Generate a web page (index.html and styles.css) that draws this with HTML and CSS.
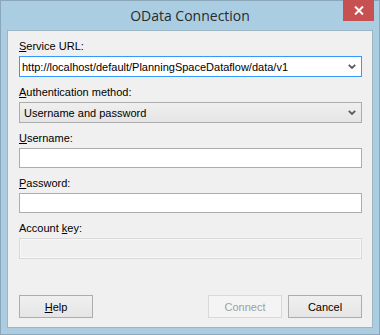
FILE: index.html
```html
<!DOCTYPE html>
<html>
<head>
<meta charset="utf-8">
<link rel="stylesheet" href="styles.css">
</head>
<body>
<div class="window">
  <div class="titlebar">
    <div class="title">OData Connection</div>
    <div class="close">
      <svg width="10" height="9" viewBox="0 0 10 9"><path d="M1 0.5 L9 8.5 M9 0.5 L1 8.5" stroke="#fff" stroke-width="2" fill="none"/></svg>
    </div>
  </div>
  <div class="client">
    <div class="field">
      <label class="label"><u>S</u>ervice URL:</label>
      <div class="combo focused">
        <span class="value">http://localhost/default/PlanningSpaceDataflow/data/v1</span>
        <svg class="chev" width="8" height="5" viewBox="0 0 8 5"><path d="M0.8 0.8 L4 4 L7.2 0.8" stroke="#5a5a5a" stroke-width="1.8" fill="none"/></svg>
      </div>
    </div>
    <div class="field">
      <label class="label"><u>A</u>uthentication method:</label>
      <div class="combo dropdown">
        <span class="value">Username and password</span>
        <svg class="chev" width="8" height="5" viewBox="0 0 8 5"><path d="M0.8 0.8 L4 4 L7.2 0.8" stroke="#5a5a5a" stroke-width="1.8" fill="none"/></svg>
      </div>
    </div>
    <div class="field">
      <label class="label"><u>U</u>sername:</label>
      <div class="textbox"></div>
    </div>
    <div class="field">
      <label class="label"><u>P</u>assword:</label>
      <div class="textbox"></div>
    </div>
    <div class="field">
      <label class="label disabled-label">Account <u>k</u>ey:</label>
      <div class="textbox disabled"></div>
    </div>
    <div class="buttons">
      <button class="btn"><u>H</u>elp</button>
      <div class="spacer"></div>
      <button class="btn btn-disabled">Connect</button>
      <button class="btn">Cancel</button>
    </div>
  </div>
</div>
</body>
</html>
```

FILE: styles.css
```css
html, body {
  margin: 0;
  padding: 0;
  background: #ffffff;
}

.window {
  box-sizing: border-box;
  width: 380px;
  height: 335px;
  background: #aacde1;
  border: 1px solid #8ba8ba;
  display: flex;
  flex-direction: column;
  padding: 0 6px 6px 6px;
}

.titlebar {
  height: 29px;
  position: relative;
  display: flex;
  align-items: center;
  justify-content: center;
}

.title {
  font-family: "Open Sans", "Noto Sans", sans-serif;
  font-size: 14px;
  color: #2a2a2a;
  margin-top: 0;
}

.close {
  position: absolute;
  top: -1px;
  right: -1px;
  width: 31px;
  height: 21px;
  background: #c75050;
  display: flex;
  align-items: center;
  justify-content: center;
}

.client {
  flex: 1;
  box-sizing: border-box;
  background: #f0f0f0;
  border: 1px solid #9db4c3;
  display: flex;
  flex-direction: column;
  padding: 9px 10px 9px 11px;
  font-family: "Liberation Sans", Arial, sans-serif;
  font-size: 11px;
  color: #000;
}

.field {
  display: flex;
  flex-direction: column;
  margin-bottom: 9px;
}

.label {
  line-height: 13px;
  height: 13px;
  margin-bottom: 3px;
}

.label u, .btn u {
  text-decoration-thickness: 1px;
  text-underline-offset: 1px;
}

.disabled-label {
  color: #000;
}

.combo {
  box-sizing: border-box;
  height: 21px;
  display: flex;
  align-items: center;
  position: relative;
}

.combo .value {
  flex: 1;
  white-space: nowrap;
  overflow: hidden;
}

.combo .chev {
  margin-right: 5px;
}

.focused {
  background: #ffffff;
  border: 1px solid #3399ff;
  padding-left: 2px;
}

.dropdown {
  background: linear-gradient(#efefef, #e5e5e5);
  border: 1px solid #acacac;
  padding-left: 4px;
}

.textbox {
  box-sizing: border-box;
  height: 20px;
  background: #ffffff;
  border: 1px solid #abadb3;
}

.textbox.disabled {
  height: 21px;
  background: #f0f0f0;
  border: 1px solid #d9d9d9;
  box-shadow: inset 0 0 0 1px #f7f7f7;
}

.buttons {
  margin-top: auto;
  display: flex;
  gap: 6px;
}

.spacer {
  flex: 1;
}

.btn {
  box-sizing: border-box;
  width: 74px;
  height: 23px;
  margin: 0;
  padding: 0;
  font-family: "Liberation Sans", Arial, sans-serif;
  font-size: 11px;
  color: #000;
  background: linear-gradient(#f0f0f0, #e5e5e5);
  border: 1px solid #adadad;
  border-radius: 0;
}

.btn-disabled {
  color: #a0a0a0;
  background: #f4f4f4;
  border-color: #d9d9d9;
}
```
